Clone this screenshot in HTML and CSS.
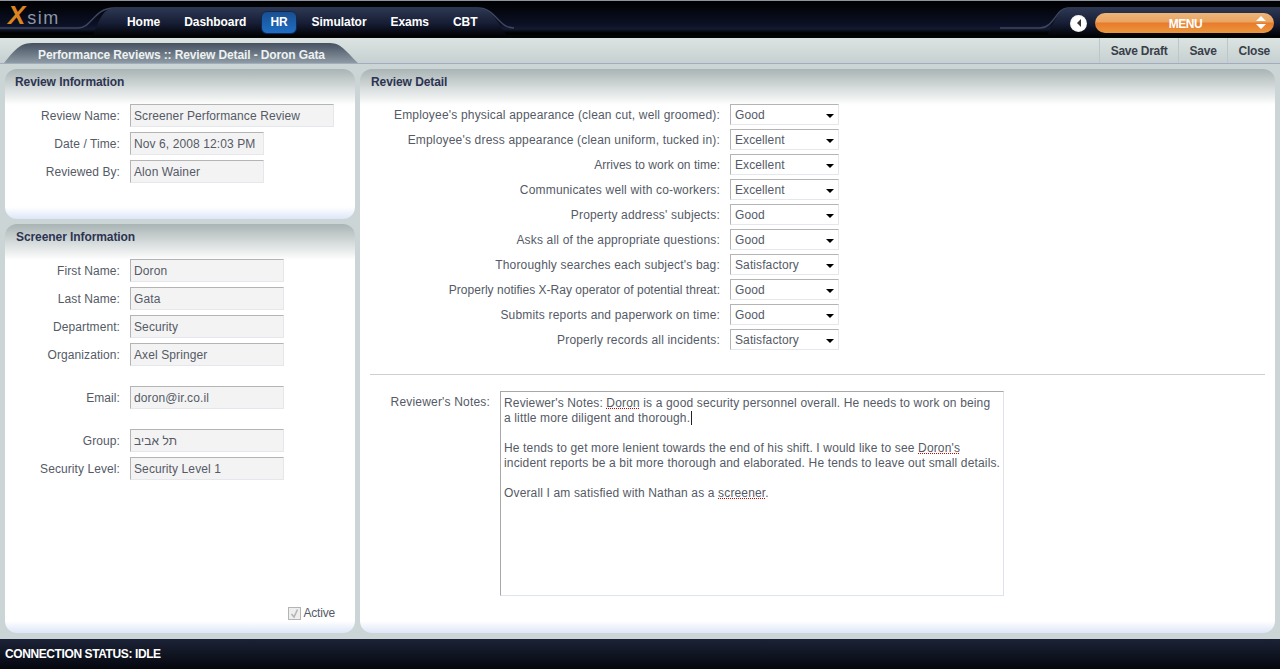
FILE: index.html
```html
<!DOCTYPE html>
<html lang="en">

<head>
    <title>Xsim - Review Detail</title>
    <link rel="stylesheet" href="styles.css">
</head>

<body>
    <!-- top navigation -->
    <div class="topbar">
        <svg class="topbar-shape" width="1280" height="37" viewBox="0 0 1280 37">
            <defs>
                <linearGradient id="tabFill" x1="0" y1="0" x2="0" y2="1">
                    <stop offset="0" stop-color="#2e3853" />
                    <stop offset="0.55" stop-color="#151c33" />
                    <stop offset="1" stop-color="#000" />
                </linearGradient>
            </defs>
            <path d="M0 28H78C92 28 94 8 114 8H478C496 8 498 28 514 28" fill="none" stroke="#3c465e" stroke-width="1.5" />
            <path d="M92 37C98 24 102 8 114 8H478C492 8 498 24 508 37Z" fill="url(#tabFill)" />
            <path d="M1280 8H1068C1056 8 1054 28 1040 28H1000" fill="none" stroke="#3c465e" stroke-width="1.5" />
            <path d="M1280 8H1068C1058 8 1054 24 1046 37H1280Z" fill="url(#tabFill)" />
        </svg>
        <div class="logo"><span class="logo-x">X</span>sim</div>
        <nav class="nav">
            <a class="nav-item">Home</a>
            <a class="nav-item">Dashboard</a>
            <a class="nav-item active">HR</a>
            <a class="nav-item">Simulator</a>
            <a class="nav-item">Exams</a>
            <a class="nav-item">CBT</a>
        </nav>
        <div class="menu-area">
            <span class="back-btn">
                <svg width="8" height="10" viewBox="0 0 8 10"><path d="M6 1V9L2 5Z" fill="#333" /></svg>
            </span>
            <div class="menu-pill">
                <span>MENU</span>
                <svg class="menu-arrows" width="12" height="13" viewBox="0 0 12 13">
                    <path d="M6 0L11 5H1Z M1 8H11L6 13Z" fill="#fff" />
                </svg>
            </div>
        </div>
    </div>

    <!-- page title and actions -->
    <div class="subbar">
        <svg class="title-shape" width="360" height="22" viewBox="0 0 360 22">
            <defs>
                <linearGradient id="titleFill" x1="0" y1="0" x2="0" y2="1">
                    <stop offset="0" stop-color="#465061" />
                    <stop offset="1" stop-color="#8d9ba3" />
                </linearGradient>
            </defs>
            <path d="M4 21C12 12 18 1 32 1H330C342 1 348 12 358 21Z" fill="url(#titleFill)" />
        </svg>
        <div class="page-title">Performance Reviews :: Review Detail - Doron Gata</div>
        <div class="actions">
            <a class="action">Save Draft</a>
            <a class="action">Save</a>
            <a class="action">Close</a>
        </div>
    </div>

    <div class="content">
        <div class="left-col">
            <div class="panel review-info">
                <h2 class="panel-title">Review Information</h2>
                <div class="row"><label>Review Name:</label><div class="field w-204">Screener Performance Review</div></div>
                <div class="row"><label>Date / Time:</label><div class="field w-134">Nov 6, 2008 12:03 PM</div></div>
                <div class="row"><label>Reviewed By:</label><div class="field w-134">Alon Wainer</div></div>
            </div>
            <div class="panel screener-info">
                <h2 class="panel-title">Screener Information</h2>
                <div class="row"><label>First Name:</label><div class="field w-154">Doron</div></div>
                <div class="row"><label>Last Name:</label><div class="field w-154">Gata</div></div>
                <div class="row"><label>Department:</label><div class="field w-154">Security</div></div>
                <div class="row"><label>Organization:</label><div class="field w-154">Axel Springer</div></div>
                <div class="row spaced"><label>Email:</label><div class="field w-154">doron@ir.co.il</div></div>
                <div class="row spaced"><label>Group:</label><div class="field w-154">תל אביב</div></div>
                <div class="row"><label>Security Level:</label><div class="field w-154">Security Level 1</div></div>
                <div class="active-line">
                    <span class="checkbox">
                        <svg width="11" height="11" viewBox="0 0 11 11"><path d="M2.5 6L5 9L8.5 1.5" fill="none" stroke="#b5b5b5" stroke-width="1.6" /></svg>
                    </span>
                    Active
                </div>
            </div>
        </div>

        <div class="panel detail">
            <h2 class="panel-title">Review Detail</h2>
            <div class="rating"><label>Employee's physical appearance (clean cut, well groomed):</label><div class="select">Good</div></div>
            <div class="rating"><label>Employee's dress appearance (clean uniform, tucked in):</label><div class="select">Excellent</div></div>
            <div class="rating"><label class="tight">Arrives to work on time:</label><div class="select">Excellent</div></div>
            <div class="rating"><label>Communicates well with co-workers:</label><div class="select">Excellent</div></div>
            <div class="rating"><label>Property address' subjects:</label><div class="select">Good</div></div>
            <div class="rating"><label>Asks all of the appropriate questions:</label><div class="select">Good</div></div>
            <div class="rating"><label>Thoroughly searches each subject's bag:</label><div class="select">Satisfactory</div></div>
            <div class="rating"><label class="tight">Properly notifies X-Ray operator of potential threat:</label><div class="select">Good</div></div>
            <div class="rating"><label>Submits reports and paperwork on time:</label><div class="select">Good</div></div>
            <div class="rating"><label>Properly records all incidents:</label><div class="select">Satisfactory</div></div>
            <hr class="divider">
            <div class="notes-row">
                <label>Reviewer's Notes:</label>
                <div class="notes">
                    Reviewer's Notes: <span class="typo">Doron</span> is a good security personnel overall. He needs to work on being<br>
                    a little more diligent and thorough.<span class="caret"></span><br>
                    <br>
                    He tends to get more lenient towards the end of his shift. I would like to see <span class="typo">Doron's</span><br>
                    incident reports be a bit more thorough and elaborated. He tends to leave out small details.<br>
                    <br>
                    Overall I am satisfied with Nathan as a <span class="typo">screener</span>.
                </div>
            </div>
        </div>
    </div>

    <div class="statusbar">CONNECTION STATUS: IDLE</div>
</body>

</html>
```

FILE: styles.css
```css
* {
    box-sizing: border-box;
}

body {
    margin: 0;
    height: 669px;
    display: flex;
    flex-direction: column;
    overflow: hidden;
    background-color: #cbd5d5;
    font-family: "Liberation Sans", Arial, sans-serif;
    font-size: 12px;
    color: #555a66;
}

/* top navigation */
.topbar {
    position: relative;
    height: 38px;
    display: flex;
    align-items: flex-start;
    border-top: 1px solid #8d93a3;
    background: linear-gradient(#000 0, #0c1126 24px, #141a30 28px, #000 32px, #050608 37px);
}

.topbar-shape {
    position: absolute;
    left: 0;
    top: -1px;
}

.logo {
    position: relative;
    width: 118px;
    padding: 1px 0 0 8px;
    font-size: 18px;
    line-height: 26px;
    letter-spacing: 1.5px;
    color: #8e96a6;
}

.logo-x {
    font-size: 26px;
    font-weight: bold;
    font-style: italic;
    letter-spacing: 2px;
    color: #dc8420;
}

.nav {
    position: relative;
    display: flex;
    gap: 6px;
    margin-top: 10px;
}

.nav-item {
    height: 23px;
    padding: 0 9px;
    line-height: 22px;
    font-weight: bold;
    letter-spacing: -0.05px;
    color: #fff;
}

.nav-item.active {
    border: 1px solid #0d2a55;
    border-radius: 6px;
    padding: 0 8px;
    line-height: 21px;
    background: linear-gradient(#1a4f8f, #1f6ec4);
}

.menu-area {
    position: relative;
    display: flex;
    align-items: center;
    gap: 8px;
    margin: 12px 6px 0 auto;
}

.back-btn {
    width: 17px;
    height: 17px;
    display: flex;
    align-items: center;
    justify-content: center;
    border-radius: 50%;
    background: radial-gradient(#fff 55%, #c9c9c9);
}

.menu-pill {
    position: relative;
    width: 179px;
    height: 20px;
    padding-left: 2px;
    border-radius: 10px;
    background: linear-gradient(#ecb47a 0, #e9a561 45%, #e87a2c 50%, #e9973e 100%);
    text-align: center;
    line-height: 22px;
    font-weight: bold;
    letter-spacing: -0.4px;
    color: #fff;
}

.menu-arrows {
    position: absolute;
    right: 7px;
    top: 3px;
}

/* page title and actions */
.subbar {
    position: relative;
    height: 26px;
    display: flex;
    justify-content: space-between;
    border-bottom: 1px solid #a3abc0;
    background: linear-gradient(#dbe4e1, #c6d0d1);
}

.title-shape {
    position: absolute;
    left: 0;
    top: 4px;
}

.page-title {
    position: relative;
    padding: 10px 0 0 38px;
    font-weight: bold;
    letter-spacing: -0.12px;
    color: #eef2f2;
}

.actions {
    display: flex;
}

.action {
    padding: 6px 10px 0 11px;
    border-left: 1px solid #bcc6c6;
    font-weight: bold;
    letter-spacing: -0.25px;
    color: #3a3f4a;
}

/* panels */
.content {
    flex: 1;
    display: flex;
    gap: 5px;
    padding: 5px 5px 6px;
    min-height: 0;
}

.left-col {
    width: 350px;
    display: flex;
    flex-direction: column;
    gap: 5px;
}

.panel {
    border-radius: 12px;
    background:
        linear-gradient(#a9b4b4, #fff) top / 100% 36px no-repeat,
        linear-gradient(#fff, #dde6f7) bottom / 100% 12px no-repeat,
        #fff;
}

.panel-title {
    margin: 0;
    height: 35px;
    padding: 6px 0 0 10px;
    font-size: 12px;
    font-weight: bold;
    letter-spacing: -0.08px;
    color: #2c3452;
}

.review-info {
    height: 150px;
}

.screener-info {
    position: relative;
    flex: 1;
}

.screener-info .panel-title {
    padding-left: 11px;
}

.row {
    display: flex;
    align-items: center;
    margin-bottom: 5px;
}

.row.spaced {
    margin-top: 20px;
}

.row label {
    width: 115px;
    text-align: right;
    margin-right: 10px;
    letter-spacing: 0.08px;
}

.field {
    height: 23px;
    padding: 0 3px;
    line-height: 22px;
    border: 1px solid;
    border-color: #b4b4b4 #e4e8ec #e4e8ec #b4b4b4;
    background-color: #f3f3f3;
    letter-spacing: 0.1px;
    white-space: nowrap;
}

.w-204 {
    width: 204px;
}

.w-134 {
    width: 134px;
}

.w-154 {
    width: 154px;
}

.active-line {
    position: absolute;
    right: 20px;
    bottom: 13px;
    display: flex;
    align-items: center;
    gap: 3px;
    letter-spacing: -0.2px;
}

.checkbox {
    width: 13px;
    height: 13px;
    display: flex;
    align-items: center;
    justify-content: center;
    border: 1px solid #b4b4b4;
    background-color: #eee;
}

.detail {
    flex: 1;
}

.detail .panel-title {
    padding-left: 11px;
}

.rating {
    display: flex;
    align-items: center;
    height: 21px;
    margin-bottom: 4px;
}

.rating label {
    width: 360px;
    text-align: right;
    margin-right: 10px;
    letter-spacing: 0.18px;
}

.rating label.tight {
    letter-spacing: 0.02px;
}

.select {
    position: relative;
    width: 109px;
    height: 21px;
    padding-left: 4px;
    line-height: 20px;
    border: 1px solid;
    border-color: #b4b4b4 #e4e8ec #e4e8ec #b4b4b4;
    background-color: #fff;
    letter-spacing: 0.1px;
}

/* little dropdown arrow */
.select::after {
    content: "";
    position: absolute;
    right: 4px;
    top: 9px;
    border-top: 4px solid #000;
    border-left: 4px solid transparent;
    border-right: 4px solid transparent;
}

.divider {
    margin: 24px 10px 16px;
    border: 0;
    border-top: 1px solid #cdd0d2;
}

.notes-row {
    display: flex;
}

.notes-row label {
    width: 130px;
    padding-top: 4px;
    text-align: right;
    margin-right: 10px;
    letter-spacing: 0.18px;
}

.notes {
    width: 504px;
    height: 205px;
    padding: 4px 3px;
    line-height: 15px;
    border: 1px solid;
    border-color: #a8a8a8 #dfe4ec #dfe4ec #a8a8a8;
    letter-spacing: 0.15px;
    white-space: nowrap;
}

.typo {
    text-decoration: underline dotted #d00000;
}

.caret {
    display: inline-block;
    width: 1px;
    height: 14px;
    margin-left: 1px;
    vertical-align: -3px;
    background-color: #222;
}

/* connection status */
.statusbar {
    height: 30px;
    padding-left: 5px;
    line-height: 30px;
    font-weight: bold;
    letter-spacing: -0.4px;
    color: #fff;
    background: linear-gradient(#1c2337, #05070e);
}
```
